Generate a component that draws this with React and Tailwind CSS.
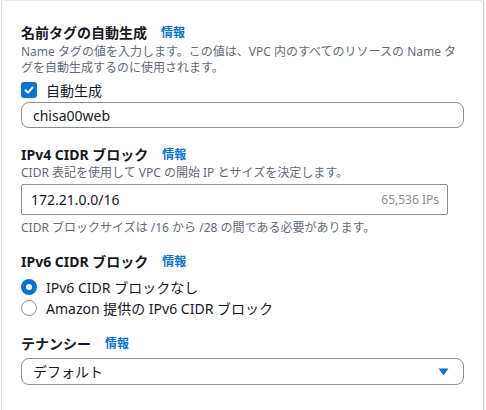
import React from "react";

const FONT = { fontFamily: '"Noto Sans", "Noto Sans CJK JP", sans-serif' };

const Label = ({ children, infoGap = "ml-[14px]" }) => (
  <div className="flex items-center h-5 leading-5">
    <span className="text-[14px] font-bold text-[#16191f]">{children}</span>
    <a className={`${infoGap} text-[12px] font-bold text-[#0972d3]`}>情報</a>
  </div>
);

const Radio = ({ checked, label, className = "" }) => (
  <div className={`flex items-center h-5 ${className}`}>
    {checked ? (
      <span className="w-4 h-4 rounded-full border-[5px] border-[#0972d3] bg-white" />
    ) : (
      <span className="w-4 h-4 rounded-full border-[1.5px] border-[#8c8c94] bg-white" />
    )}
    <span className="ml-[9px] text-[14px] text-[#16191f]">{label}</span>
  </div>
);

export default function App() {
  return (
    <div
      style={FONT}
      className="w-[483px] h-[410px] bg-white border-l border-r border-t border-l-[#d5dbdb] border-r-[#c6c6cd] border-t-[#eaeded] ml-px"
    >
      <div className="flex flex-col px-[19px] pt-[22px]">
        {/* Name tag */}
        <Label>名前タグの自動生成</Label>
        <p className="mt-px text-[12px] leading-4 text-[#5f6b7a]">
          Name タグの値を入力します。この値は、VPC 内のすべてのリソースの Name タグを自動生成するのに使用されます。
        </p>
        <div className="mt-1 flex items-center h-5">
          <span className="w-4 h-4 rounded-[3px] bg-[#0972d3] flex items-center justify-center">
            <svg width="12" height="12" viewBox="0 0 12 12">
              <path d="M2.5 6.2 L5 8.6 L9.6 3.4" fill="none" stroke="white" strokeWidth="2" strokeLinecap="round" strokeLinejoin="round" />
            </svg>
          </span>
          <span className="ml-[9px] text-[14px] text-[#16191f]">自動生成</span>
        </div>
        <div className="mt-[2px] h-[26px] w-[443px] rounded-lg border border-[#8c8c94] flex items-center px-[11px] text-[14px] text-[#16191f]">
          chisa00web
        </div>

        {/* IPv4 */}
        <div className="mt-[17px]">
          <Label>IPv4 CIDR ブロック</Label>
        </div>
        <p className="text-[12px] leading-4 text-[#5f6b7a]">
          CIDR 表記を使用して VPC の開始 IP とサイズを決定します。
        </p>
        <div className="mt-[3px] h-[31px] w-[427px] rounded-[2px] border border-[#8c8c94] flex items-center justify-between pl-[9px] pr-[8px]">
          <span className="text-[14px] text-[#16191f]">172.21.0.0/16</span>
          <span className="text-[12px] text-[#8c8c94]">65,536 IPs</span>
        </div>
        <p className="mt-[5px] text-[12px] leading-4 text-[#5f6b7a]">
          CIDR ブロックサイズは /16 から /28 の間である必要があります。
        </p>

        {/* IPv6 */}
        <div className="mt-4">
          <Label>IPv6 CIDR ブロック</Label>
        </div>
        <Radio checked label="IPv6 CIDR ブロックなし" className="mt-[5px]" />
        <Radio label="Amazon 提供の IPv6 CIDR ブロック" className="mt-px" />

        {/* Tenancy */}
        <div className="mt-4">
          <Label>テナンシー</Label>
        </div>
        <div className="mt-1 h-[27px] w-[443px] rounded-lg border border-[#8c8c94] flex items-center justify-between pl-[11px] pr-[14px]">
          <span className="text-[14px] text-[#16191f]">デフォルト</span>
          <svg width="11" height="8" viewBox="0 0 11 8">
            <path d="M0.5 0.5 L10.5 0.5 L5.5 7.5 Z" fill="#0972d3" />
          </svg>
        </div>
      </div>
    </div>
  );
}
